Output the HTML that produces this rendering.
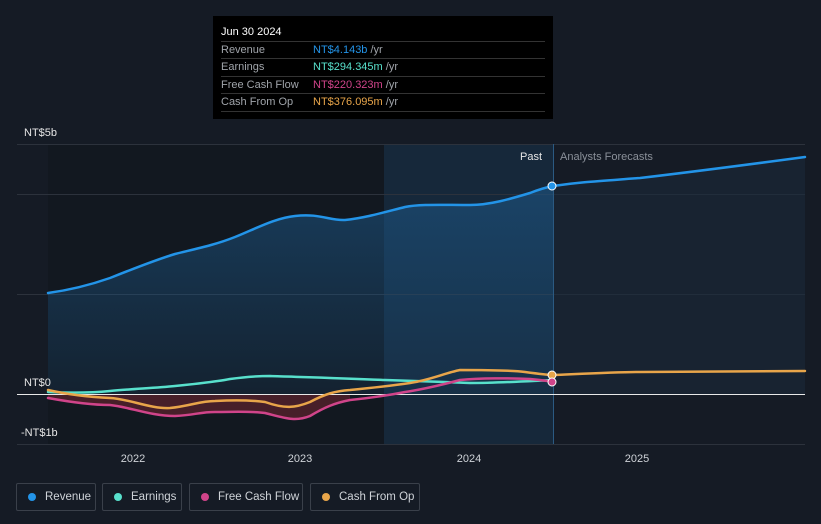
<!DOCTYPE html><html><head><style>
body{margin:0;background:#151b25;width:821px;height:524px;overflow:hidden;font-family:"Liberation Sans",sans-serif}
.lg{position:absolute;top:483px;height:28px;border:1px solid #3a404a;border-radius:2px;box-sizing:border-box;color:#cfd3d8;font-size:11.5px;line-height:26px;padding-left:28px;white-space:nowrap}
.lg i{position:absolute;left:11px;top:9px;width:8px;height:8px;border-radius:50%}
</style></head><body>
<svg width="821" height="524" style="position:absolute;left:0;top:0">
<defs><linearGradient id="fr" x1="0" y1="0" x2="0" y2="1"><stop offset="0" stop-color="#1d5a8c" stop-opacity=".55"/><stop offset="1" stop-color="#1d5a8c" stop-opacity=".15"/></linearGradient></defs>
<rect x="48" y="144" width="336" height="300" fill="#121820"/>
<rect x="384" y="144" width="169" height="300" fill="#16283a"/>
<g stroke="#2c323c" stroke-width="1"><line x1="17" y1="144.5" x2="805" y2="144.5"/><line x1="17" y1="194.5" x2="805" y2="194.5"/><line x1="17" y1="294.5" x2="805" y2="294.5"/><line x1="17" y1="444.5" x2="805" y2="444.5"/></g>
<path d="M48,293 C70,290 90,285 110,278 C130,270 155,260 175,254 C195,249 215,245 235,237 C255,229 275,218 295,216 C320,213 330,221 345,220 C365,218 385,212 405,207 C420,204 440,205 470,205 C490,205 510,199 530,193 C540,189 548,187 553,186 L553,394 L48,394Z" fill="url(#fr)"/>
<path d="M553,186 C580,182 600,181 640,178 C700,171 760,163 805,157 L805,394 L553,394Z" fill="#1a2a3a" opacity=".6"/>
<path d="M48,398 C70,402 90,405 110,405 C130,407 150,416 175,416 C195,415 200,412 215,412 C235,412 250,411 265,413 C285,418 295,422 310,416 C325,407 335,403 350,400 L350,394 L48,394Z" fill="#6a2430" opacity=".6"/>
<line x1="553.5" y1="144" x2="553.5" y2="444" stroke="#2b5a82"/>
<line x1="17" y1="394.5" x2="805" y2="394.5" stroke="#e8e8e8"/>
<g fill="none" stroke-width="2.5" stroke-linecap="round">
<path d="M48,392 C70,393 90,393 110,391 C130,389 155,388 175,386 C195,384 215,382 230,379 C245,377 255,376 270,376 C300,377 340,378 385,380 C420,381 440,382 470,383 C500,383 530,381 553,380" stroke="#58e0cc"/>
<path d="M48,398 C70,402 90,405 110,405 C130,407 150,416 175,416 C195,415 200,412 215,412 C235,412 250,411 265,413 C285,418 295,422 310,416 C325,407 335,403 350,400 C370,398 385,396 405,392 C425,389 445,384 460,380 C480,378 510,378 530,379 C540,380 548,381 553,382" stroke="#d0448a"/>
<path d="M48,390 C70,395 90,397 110,398 C130,399 150,409 170,408 C190,406 200,401 215,401 C235,400 250,400 265,402 C285,409 295,408 310,402 C325,394 335,391 350,390 C370,388 390,386 410,383 C430,380 445,373 460,370 C480,370 510,370 525,372 C540,374 548,375 553,375 C600,373 620,372 640,372 C700,372 760,371 805,371" stroke="#e8a54a"/>
<path d="M48,293 C70,290 90,285 110,278 C130,270 155,260 175,254 C195,249 215,245 235,237 C255,229 275,218 295,216 C320,213 330,221 345,220 C365,218 385,212 405,207 C420,204 440,205 470,205 C490,205 510,199 530,193 C540,189 548,187 553,186 C580,182 600,181 640,178 C700,171 760,163 805,157" stroke="#2394e8"/>
</g>
<circle cx="552" cy="186" r="4" fill="#2394e8" stroke="#fff" stroke-width="1"/>
<circle cx="552" cy="375" r="4" fill="#e8a54a" stroke="#fff" stroke-width="1"/>
<circle cx="552" cy="382" r="4" fill="#d0448a" stroke="#fff" stroke-width="1"/>
<g font-size="11" fill="#e6e6e6" font-family="Liberation Sans">
<text x="24" y="136">NT$5b</text><text x="24" y="386">NT$0</text><text x="21" y="436">-NT$1b</text>
<text x="520" y="160">Past</text><text x="560" y="160" fill="#8a9099">Analysts Forecasts</text>
<g fill="#cfd3d8" text-anchor="middle"><text x="133" y="462">2022</text><text x="300" y="462">2023</text><text x="469" y="462">2024</text><text x="637" y="462">2025</text></g>
</g>
<rect x="213" y="16" width="340" height="103" fill="#000"/>
<g font-size="11" font-family="Liberation Sans">
<text x="221" y="35" fill="#fff">Jun 30 2024</text>
<g stroke="#333"><line x1="221" y1="41.5" x2="545" y2="41.5"/><line x1="221" y1="58.5" x2="545" y2="58.5"/><line x1="221" y1="76.5" x2="545" y2="76.5"/><line x1="221" y1="93.5" x2="545" y2="93.5"/><line x1="221" y1="111.5" x2="545" y2="111.5"/></g>
<g fill="#a0a4aa"><text x="221" y="53">Revenue</text><text x="221" y="70">Earnings</text><text x="221" y="88">Free Cash Flow</text><text x="221" y="105">Cash From Op</text></g>
<text x="313" y="53" fill="#2394e8">NT$4.143b <tspan fill="#a0a4aa">/yr</tspan></text>
<text x="313" y="70" fill="#58e0cc">NT$294.345m <tspan fill="#a0a4aa">/yr</tspan></text>
<text x="313" y="88" fill="#d0448a">NT$220.323m <tspan fill="#a0a4aa">/yr</tspan></text>
<text x="313" y="105" fill="#e8a54a">NT$376.095m <tspan fill="#a0a4aa">/yr</tspan></text>
</g>
</svg>
<div class="lg" style="left:16px;width:80px"><i style="background:#2394e8"></i>Revenue</div>
<div class="lg" style="left:102px;width:80px"><i style="background:#58e0cc"></i>Earnings</div>
<div class="lg" style="left:189px;width:114px"><i style="background:#d0448a"></i>Free Cash Flow</div>
<div class="lg" style="left:310px;width:110px"><i style="background:#e8a54a"></i>Cash From Op</div>
</body></html>
